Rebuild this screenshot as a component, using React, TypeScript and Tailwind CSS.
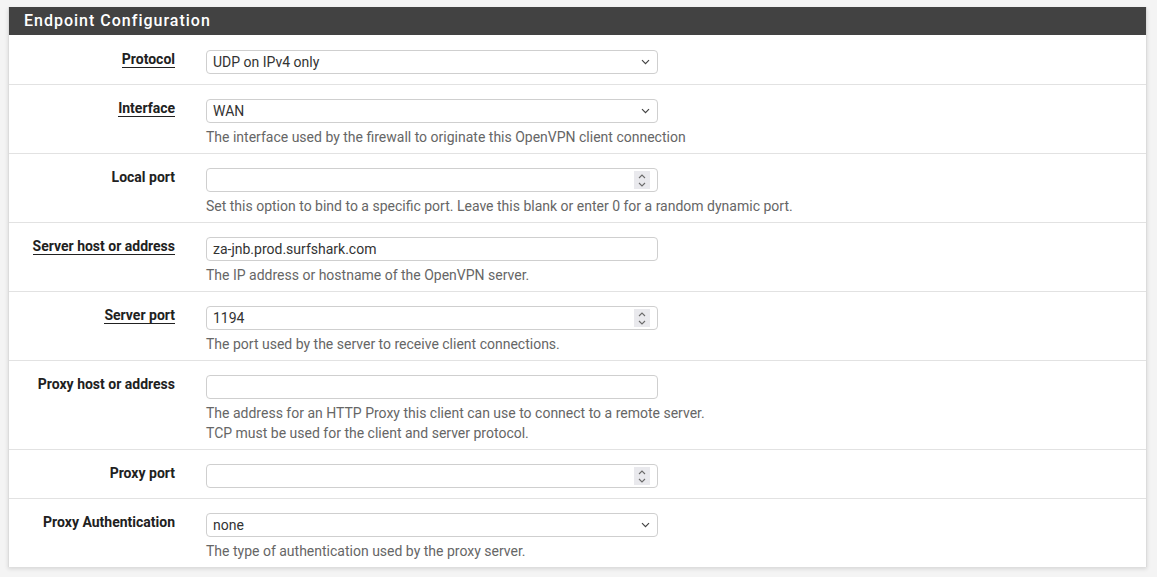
import React from 'react';

type Row = {
  label: string;
  underline?: boolean;
  kind: 'select' | 'text' | 'number';
  value?: string;
  help?: string[];
};

const rows: Row[] = [
  { label: 'Protocol', underline: true, kind: 'select', value: 'UDP on IPv4 only' },
  {
    label: 'Interface',
    underline: true,
    kind: 'select',
    value: 'WAN',
    help: ['The interface used by the firewall to originate this OpenVPN client connection'],
  },
  {
    label: 'Local port',
    kind: 'number',
    help: ['Set this option to bind to a specific port. Leave this blank or enter 0 for a random dynamic port.'],
  },
  {
    label: 'Server host or address',
    underline: true,
    kind: 'text',
    value: 'za-jnb.prod.surfshark.com',
    help: ['The IP address or hostname of the OpenVPN server.'],
  },
  {
    label: 'Server port',
    underline: true,
    kind: 'number',
    value: '1194',
    help: ['The port used by the server to receive client connections.'],
  },
  {
    label: 'Proxy host or address',
    kind: 'text',
    help: [
      'The address for an HTTP Proxy this client can use to connect to a remote server.',
      'TCP must be used for the client and server protocol.',
    ],
  },
  { label: 'Proxy port', kind: 'number' },
  {
    label: 'Proxy Authentication',
    kind: 'select',
    value: 'none',
    help: ['The type of authentication used by the proxy server.'],
  },
];

function Chevron() {
  return (
    <svg width="9" height="6" viewBox="0 0 9 6" fill="none" stroke="#444" strokeWidth="1.2">
      <path d="M1 1.2l3.5 3.5 3.5-3.5" />
    </svg>
  );
}

function Spinner() {
  return (
    <div className="flex h-[18px] w-[16px] flex-col items-center justify-center gap-[3px] bg-[#e9e9ed]">
      <svg width="8" height="5" viewBox="0 0 8 5" fill="none" stroke="#6b6b6b" strokeWidth="1.1">
        <path d="M1 4l3-3 3 3" />
      </svg>
      <svg width="8" height="5" viewBox="0 0 8 5" fill="none" stroke="#6b6b6b" strokeWidth="1.1">
        <path d="M1 1l3 3 3-3" />
      </svg>
    </div>
  );
}

function Field({ row }: { row: Row }) {
  return (
    <div className="flex h-[24px] w-[452px] items-center rounded-[4px] border border-[#cfcfcf] bg-white pl-[6px] pr-[7px] text-[14px] text-[#333]">
      <span className="flex-1 truncate">{row.value ?? ''}</span>
      {row.kind === 'select' && <Chevron />}
      {row.kind === 'number' && <Spinner />}
    </div>
  );
}

export default function App() {
  return (
    <div
      className="min-h-[577px] bg-[#f4f4f4] pt-[7px] pl-[8px] pr-[10px]"
      style={{ fontFamily: 'Roboto, "Liberation Sans", sans-serif' }}
    >
      <div className="border-x border-[#dcdcdc] bg-white shadow-[0_2px_4px_rgba(0,0,0,0.12)]">
        <div className="flex h-[28px] items-center bg-[#424242] pl-[15px] text-[16px] font-medium tracking-[1px] text-white">
          Endpoint Configuration
        </div>
        {rows.map((row, i) => (
          <div
            key={row.label}
            className={`flex items-start pt-[14px] ${row.help ? 'pb-[6px]' : 'pb-[10px]'} ${
              i > 0 ? 'border-t border-[#e2e2e2]' : 'pt-[15px]'
            }`}
          >
            <div className="-mt-px w-[166px] shrink-0 text-right text-[14px] leading-5 font-bold text-[#212121]">
              <span className={row.underline ? 'border-b border-[#212121]' : ''}>{row.label}</span>
            </div>
            <div className="ml-[31px]">
              <Field row={row} />
              {row.help && (
                <div className="mt-[4px] text-[14px] leading-5 text-[#666]">
                  {row.help.map((h) => (
                    <div key={h}>{h}</div>
                  ))}
                </div>
              )}
            </div>
          </div>
        ))}
      </div>
    </div>
  );
}
